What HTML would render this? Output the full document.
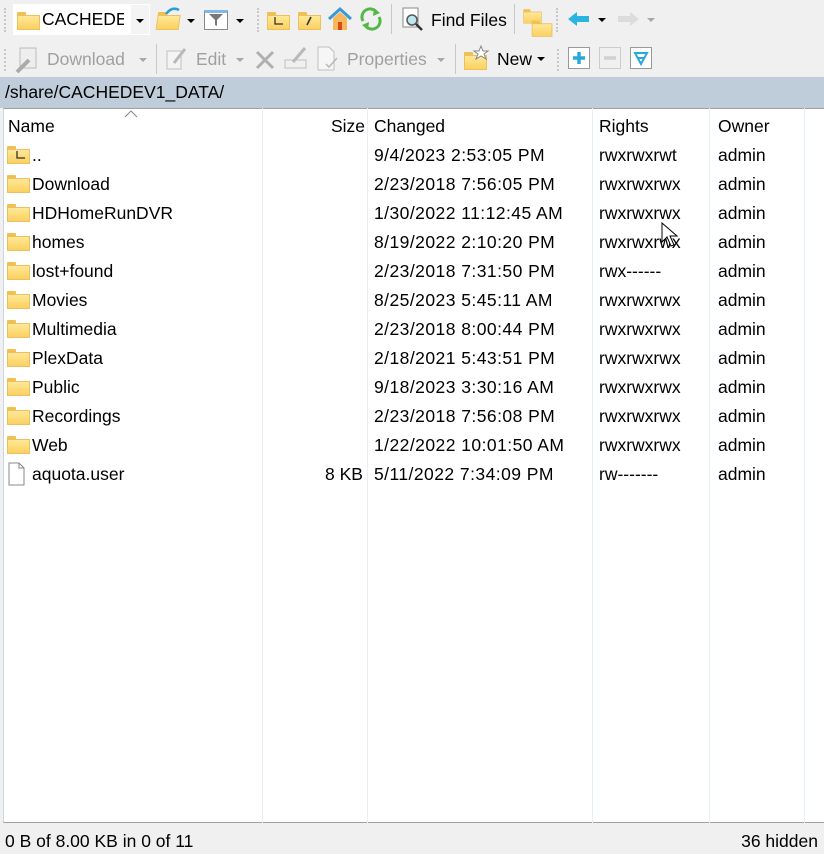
<!DOCTYPE html>
<html><head><meta charset="utf-8"><style>
*{margin:0;padding:0;box-sizing:border-box}
body{width:824px;height:852px;background:#f0f0f0;font-family:"Liberation Sans",sans-serif;font-size:17.5px;color:#000;position:relative;overflow:hidden}
.a{position:absolute;white-space:nowrap}
.d{letter-spacing:0.45px}
.g{color:#a0a0a0}
.grip{position:absolute;width:4px;border-left:2px dotted #c8c8c8}
.sep{position:absolute;width:1px;background:#c8c8c8}
.fold{position:absolute;width:21px;height:16px}
.fold:before{content:"";position:absolute;left:0;top:0;width:9px;height:4px;background:#f0c050;border-radius:1px 1px 0 0}
.fold:after{content:"";position:absolute;left:0;top:3px;width:21px;height:13px;background:linear-gradient(#ffe898,#fbd060);border:1px solid #ecc060}
.list{position:absolute;left:3px;top:108px;width:821px;height:715px;background:#fff;border-left:1px solid #c9d6e6;border-top:1px solid #a0a0a0;border-bottom:1px solid #a0a0a0}
.vl{position:absolute;top:108px;height:715px;width:1px;background:#e6eef8}
.dd{position:absolute;width:0;height:0;border-left:4px solid transparent;border-right:4px solid transparent;border-top:4px solid #000}
.ddg{border-top-color:#a8a8a8}
.sh{position:absolute;left:0;top:2px;width:824px;height:852px}
</style></head><body>
<!-- toolbar row 1 -->
<div class="grip" style="left:4px;top:8px;height:24px"></div>
<div class="a" style="left:13px;top:4px;width:137px;height:31px;background:#fff"></div>
<div class="fold" style="left:17px;top:12px"></div>
<div class="a" style="left:42px;top:9px;width:82px;overflow:hidden">CACHEDEV1</div>
<div class="a" style="left:131px;top:5px;width:18px;height:29px;background:#f4f4f4"></div>
<div class="dd" style="left:136px;top:19px"></div>
<div class="fold" style="left:157px;top:12px;transform:skewX(-8deg)"></div>
<svg class="a" style="left:164px;top:4px" width="18" height="12"><path d="M2 10 Q8 2 15 6" stroke="#2a9fd6" stroke-width="2.5" fill="none"/></svg>
<div class="dd" style="left:187px;top:19px"></div>
<div class="a" style="left:204px;top:10px;width:24px;height:20px;border:1px solid #888;background:#fff;border-top:3px solid #7fb8e0"></div>
<svg class="a" style="left:207px;top:13px" width="18" height="14"><path d="M2 1 H16 L10 7 V13 L8 12 V7 Z" fill="#777"/></svg>
<div class="dd" style="left:236px;top:19px"></div>
<div class="grip" style="left:257px;top:8px;height:24px"></div>
<div class="fold" style="left:267px;top:12px"></div>
<svg class="a" style="left:272px;top:17px" width="12" height="10"><path d="M3 0 V7 H11" stroke="#333" stroke-width="1.3" fill="none"/></svg>
<div class="fold" style="left:298px;top:12px"></div>
<svg class="a" style="left:303px;top:16px" width="12" height="10"><path d="M4 9 L8 1" stroke="#333" stroke-width="1.6"/></svg>
<svg class="a" style="left:327px;top:6px" width="26" height="26"><path d="M2 13 L13 3 L24 13" stroke="#3a9ad8" stroke-width="3" fill="none"/><path d="M6 12 V24 H20 V12 L13 6Z" fill="#f6b85a"/><rect x="11" y="16" width="4" height="8" fill="#d84a1a"/></svg>
<svg class="a" style="left:358px;top:5px" width="26" height="28"><path d="M5 16 A8 8 0 0 1 19 8" stroke="#54b848" stroke-width="3" fill="none"/><path d="M21 12 A8 8 0 0 1 7 20" stroke="#54b848" stroke-width="3" fill="none"/><path d="M16 3 L22 8 L15 11Z" fill="#54b848"/><path d="M10 25 L4 20 L11 17Z" fill="#54b848"/></svg>
<div class="sep" style="left:391px;top:4px;height:30px"></div>
<svg class="a" style="left:402px;top:7px" width="22" height="26"><rect x="1" y="1" width="15" height="19" fill="#fff" stroke="#888"/><circle cx="10" cy="13" r="5" fill="#bfe6f0" stroke="#555" stroke-width="1.5"/><path d="M14 17 L20 23" stroke="#333" stroke-width="2.5"/></svg>
<div class="a" style="left:431px;top:10px">Find Files</div>
<div class="sep" style="left:514px;top:4px;height:30px"></div>
<div class="fold" style="left:522px;top:8px;width:13px;height:12px;transform:scale(.8)"></div>
<div class="fold" style="left:531px;top:20px;width:14px;height:12px;transform:scale(.9)"></div>
<div class="grip" style="left:556px;top:8px;height:24px"></div>
<svg class="a" style="left:567px;top:11px" width="24" height="16"><path d="M1 8 L10 1 V5 H22 V11 H10 V15Z" fill="#2ab4e0"/></svg>
<div class="dd" style="left:598px;top:18px"></div>
<svg class="a" style="left:616px;top:11px" width="24" height="16"><path d="M23 8 L14 1 V5 H2 V11 H14 V15Z" fill="#dcdcdc"/></svg>
<div class="dd ddg" style="left:647px;top:18px"></div>
<!-- toolbar row 2 -->
<div class="grip" style="left:4px;top:49px;height:22px"></div>
<svg class="a" style="left:14px;top:46px" width="28" height="28"><rect x="6" y="2" width="16" height="20" fill="#eee" stroke="#bbb"/><path d="M3 26 L15 14" stroke="#aaa" stroke-width="4"/></svg>
<div class="a g" style="left:47px;top:49px">Download</div>
<div class="dd ddg" style="left:139px;top:58px"></div>
<div class="sep" style="left:156px;top:44px;height:30px"></div>
<svg class="a" style="left:166px;top:47px" width="22" height="24"><rect x="1" y="4" width="14" height="18" fill="#f4f4f4" stroke="#c0c0c0"/><path d="M8 16 L19 2" stroke="#b8b8b8" stroke-width="3"/></svg>
<div class="a g" style="left:196px;top:49px">Edit</div>
<div class="dd ddg" style="left:236px;top:58px"></div>
<svg class="a" style="left:255px;top:50px" width="20" height="20"><path d="M2 2 L18 18 M18 2 L2 18" stroke="#b0b0b0" stroke-width="3"/></svg>
<svg class="a" style="left:284px;top:46px" width="24" height="24"><rect x="1" y="14" width="21" height="8" fill="none" stroke="#c0c0c0"/><path d="M9 16 L21 2" stroke="#b8b8b8" stroke-width="3"/></svg>
<svg class="a" style="left:317px;top:46px" width="24" height="26"><path d="M1 1 H12 L17 6 V24 H1Z" fill="#f6f6f6" stroke="#c0c0c0"/><path d="M9 18 L12 21 L20 12" stroke="#b8b8b8" stroke-width="1.5" fill="none"/></svg>
<div class="a g" style="left:347px;top:49px">Properties</div>
<div class="dd ddg" style="left:437px;top:58px"></div>
<div class="sep" style="left:455px;top:44px;height:30px"></div>
<div class="fold" style="left:464px;top:52px"></div>
<svg class="a" style="left:472px;top:45px" width="18" height="16"><path d="M9 1 L11 6 L16 6 L12 9 L14 14 L9 11 L4 14 L6 9 L2 6 L7 6Z" fill="#fff" stroke="#888"/></svg>
<div class="a" style="left:497px;top:49px">New</div>
<div class="dd" style="left:537px;top:57px"></div>
<div class="grip" style="left:557px;top:49px;height:22px"></div>
<div class="a" style="left:568px;top:47px;width:22px;height:22px;border:1px solid #999;background:#fff"></div>
<svg class="a" style="left:571px;top:50px" width="16" height="16"><path d="M8 2 V14 M2 8 H14" stroke="#2aa8dc" stroke-width="3.5"/></svg>
<div class="a" style="left:599px;top:47px;width:22px;height:22px;border:1px solid #ccc;background:#f0f0f0"></div>
<svg class="a" style="left:602px;top:50px" width="16" height="16"><path d="M2 8 H14" stroke="#d0d0d0" stroke-width="3.5"/></svg>
<div class="a" style="left:630px;top:47px;width:22px;height:22px;border:1px solid #999;background:#fff"></div>
<svg class="a" style="left:633px;top:50px" width="16" height="16"><path d="M2 3 H14 L8 14Z M5 8 H11" stroke="#2aa8dc" stroke-width="2" fill="none"/></svg>
<!-- path bar -->
<div class="a" style="left:0;top:77px;width:824px;height:31px;background:#bfcddb"></div>
<div class="a" style="left:5px;top:82px">/share/CACHEDEV1_DATA/</div>
<!-- list -->
<div class="list"></div>
<div class="vl" style="left:262px"></div>
<div class="vl" style="left:367px"></div>
<div class="vl" style="left:592px"></div>
<div class="vl" style="left:709px"></div>
<div class="vl" style="left:804px"></div>
<svg class="a" style="left:124px;top:110px" width="14" height="8"><path d="M1 7 L7 1 L13 7" stroke="#888" fill="none"/></svg>
<div class="sh">
<div class="a" style="left:8px;top:114px">Name</div>
<div class="a" style="left:331px;top:114px">Size</div>
<div class="a" style="left:374px;top:114px">Changed</div>
<div class="a" style="left:599px;top:114px">Rights</div>
<div class="a" style="left:718px;top:114px">Owner</div>

<div class="fold" style="left:7px;top:144px"></div>
<svg class="a" style="left:14px;top:149px" width="12" height="10"><path d="M3 0 V7 H11" stroke="#333" stroke-width="1.3" fill="none"/></svg>
<div class="a" style="left:32px;top:143px">..</div><div class="a d" style="left:374px;top:143px">9/4/2023 2:53:05 PM</div><div class="a" style="left:599px;top:143px">rwxrwxrwt</div><div class="a" style="left:718px;top:143px">admin</div>

<div class="fold" style="left:7px;top:173px"></div><div class="a" style="left:32px;top:172px">Download</div><div class="a d" style="left:374px;top:172px">2/23/2018 7:56:05 PM</div><div class="a" style="left:599px;top:172px">rwxrwxrwx</div><div class="a" style="left:718px;top:172px">admin</div>
<div class="fold" style="left:7px;top:202px"></div><div class="a" style="left:32px;top:201px">HDHomeRunDVR</div><div class="a d" style="left:374px;top:201px">1/30/2022 11:12:45 AM</div><div class="a" style="left:599px;top:201px">rwxrwxrwx</div><div class="a" style="left:718px;top:201px">admin</div>
<div class="fold" style="left:7px;top:231px"></div><div class="a" style="left:32px;top:230px">homes</div><div class="a d" style="left:374px;top:230px">8/19/2022 2:10:20 PM</div><div class="a" style="left:599px;top:230px">rwxrwxrwx</div><div class="a" style="left:718px;top:230px">admin</div>
<div class="fold" style="left:7px;top:260px"></div><div class="a" style="left:32px;top:259px">lost+found</div><div class="a d" style="left:374px;top:259px">2/23/2018 7:31:50 PM</div><div class="a" style="left:599px;top:259px">rwx------</div><div class="a" style="left:718px;top:259px">admin</div>
<div class="fold" style="left:7px;top:289px"></div><div class="a" style="left:32px;top:288px">Movies</div><div class="a d" style="left:374px;top:288px">8/25/2023 5:45:11 AM</div><div class="a" style="left:599px;top:288px">rwxrwxrwx</div><div class="a" style="left:718px;top:288px">admin</div>
<div class="fold" style="left:7px;top:318px"></div><div class="a" style="left:32px;top:317px">Multimedia</div><div class="a d" style="left:374px;top:317px">2/23/2018 8:00:44 PM</div><div class="a" style="left:599px;top:317px">rwxrwxrwx</div><div class="a" style="left:718px;top:317px">admin</div>
<div class="fold" style="left:7px;top:347px"></div><div class="a" style="left:32px;top:346px">PlexData</div><div class="a d" style="left:374px;top:346px">2/18/2021 5:43:51 PM</div><div class="a" style="left:599px;top:346px">rwxrwxrwx</div><div class="a" style="left:718px;top:346px">admin</div>
<div class="fold" style="left:7px;top:376px"></div><div class="a" style="left:32px;top:375px">Public</div><div class="a d" style="left:374px;top:375px">9/18/2023 3:30:16 AM</div><div class="a" style="left:599px;top:375px">rwxrwxrwx</div><div class="a" style="left:718px;top:375px">admin</div>
<div class="fold" style="left:7px;top:405px"></div><div class="a" style="left:32px;top:404px">Recordings</div><div class="a d" style="left:374px;top:404px">2/23/2018 7:56:08 PM</div><div class="a" style="left:599px;top:404px">rwxrwxrwx</div><div class="a" style="left:718px;top:404px">admin</div>
<div class="fold" style="left:7px;top:434px"></div><div class="a" style="left:32px;top:433px">Web</div><div class="a d" style="left:374px;top:433px">1/22/2022 10:01:50 AM</div><div class="a" style="left:599px;top:433px">rwxrwxrwx</div><div class="a" style="left:718px;top:433px">admin</div>
<svg class="a" style="left:8px;top:460px" width="18" height="24"><path d="M1 1 H11 L16 6 V23 H1Z M11 1 V6 H16" fill="#fff" stroke="#888"/></svg>
<div class="a" style="left:32px;top:462px">aquota.user</div><div class="a" style="left:325px;top:462px">8 KB</div><div class="a d" style="left:374px;top:462px">5/11/2022 7:34:09 PM</div><div class="a" style="left:599px;top:462px">rw-------</div><div class="a" style="left:718px;top:462px">admin</div>
</div>
<svg class="a" style="left:661px;top:222px" width="20" height="26"><path d="M1 1 V20 L6 15 L10 24 L13 23 L9 14 L16 14Z" fill="#fff" stroke="#000"/></svg>
<!-- status -->
<div class="a" style="left:5px;top:831px">0 B of 8.00 KB in 0 of 11</div>
<div class="a" style="right:6px;top:831px">36 hidden</div>
</body></html>
